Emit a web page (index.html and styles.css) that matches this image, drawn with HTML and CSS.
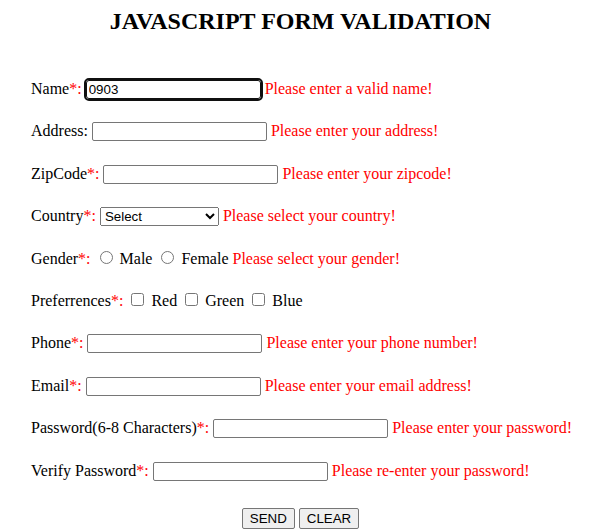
FILE: index.html
```html
<!DOCTYPE html>
<html>
<head>
<meta charset="utf-8">
<title>JavaScript Form Validation</title>
<link rel="stylesheet" href="styles.css">
</head>
<body>
<h2 class="title">JAVASCRIPT FORM VALIDATION</h2>
<form class="form">
  <div class="row">Name<span class="req">*:</span> <input type="text" class="field focused" value="0903"> <span class="err">Please enter a valid name!</span></div>
  <div class="row">Address: <input type="text" class="field"> <span class="err">Please enter your address!</span></div>
  <div class="row">ZipCode<span class="req">*:</span> <input type="text" class="field"> <span class="err">Please enter your zipcode!</span></div>
  <div class="row">Country<span class="req">*:</span> <select class="select"><option>Select</option><option>India</option><option>USA</option></select> <span class="err">Please select your country!</span></div>
  <div class="row">Gender<span class="req">*:</span> <input type="radio" name="g" class="radio"> Male <input type="radio" name="g" class="radio"> Female <span class="err">Please select your gender!</span></div>
  <div class="row">Preferrences<span class="req">*:</span> <input type="checkbox" class="check"> Red <input type="checkbox" class="check"> Green <input type="checkbox" class="check"> Blue</div>
  <div class="row">Phone<span class="req">*:</span> <input type="text" class="field"> <span class="err">Please enter your phone number!</span></div>
  <div class="row">Email<span class="req">*:</span> <input type="text" class="field"> <span class="err">Please enter your email address!</span></div>
  <div class="row">Password(6-8 Characters)<span class="req">*:</span> <input type="password" class="field"> <span class="err">Please enter your password!</span></div>
  <div class="row">Verify Password<span class="req">*:</span> <input type="password" class="field"> <span class="err">Please re-enter your password!</span></div>
  <div class="actions"><button type="button" class="btn">SEND</button> <button type="reset" class="btn">CLEAR</button></div>
</form>
</body>
</html>
```
FILE: styles.css
```css
body {
  margin: 8px;
  font-family: "Liberation Serif", "Times New Roman", serif;
  font-size: 16px;
  color: #000;
  background: #fff;
}
.title {
  margin: 0;
  padding-top: 0;
  text-align: center;
  font-size: 24px;
  font-weight: bold;
}
.form {
  padding-left: 23px;
  margin-top: 43px;
}
.row {
  line-height: 21px;
  margin-bottom: 21.4px;
  white-space: nowrap;
}
.req {
  color: #f00;
}
.err {
  color: #f00;
}
.field {
  font-family: Arial, "Liberation Sans", sans-serif;
  font-size: 13.333px;
  width: 169px;
  height: 15px;
  padding: 1px 2px;
  border: 1px solid #767676;
  border-radius: 2px;
  vertical-align: baseline;
  box-sizing: content-box;
}
.focused {
  outline: 2px solid #101010;
  outline-offset: 0;
  border-color: #101010;
  border-radius: 3px;
}
.select {
  font-family: Arial, "Liberation Sans", sans-serif;
  font-size: 13.333px;
  width: 119px;
}
.radio {
  margin: 3px 3px 0 5px;
}
.check {
  margin: 3px 3px 3px 4px;
}
.actions {
  text-align: center;
  margin-top: 27.5px;
  margin-left: -23px;
}
.btn {
  font-family: Arial, "Liberation Sans", sans-serif;
  font-size: 13.333px;
  line-height: 15px;
  padding: 2px 7px;
  border: 1px solid #767676;
  border-radius: 2px;
  background: #efefef;
  color: #000;
}
```
